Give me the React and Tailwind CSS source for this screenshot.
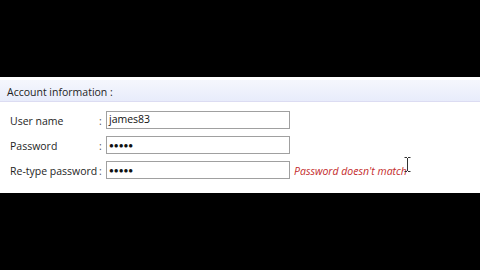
import React from 'react';

const rows = [
  { label: 'User name', value: 'james83' },
  { label: 'Password', value: '●●●●●', secret: true },
  { label: 'Re-type password', value: '●●●●●', secret: true, error: "Password doesn't match" },
];

export default function App() {
  return (
    <div className="w-[480px] h-[270px] bg-black flex flex-col" style={{ fontFamily: '"Open Sans", "Noto Sans", sans-serif' }}>
      <div className="h-[77px]" />
      <div className="relative h-[116px] bg-white flex flex-col pt-[3px]">
        <div className="h-[22px] bg-gradient-to-b from-[#f5f7fd] to-[#e8ecfb] border-b border-[#dcdcf2] flex items-center pl-[7px] pt-[5px] text-[10.5px] text-[#1e1e1e] whitespace-nowrap">
          Account information :
        </div>
        <div className="flex flex-col gap-[7px] pt-[9px]">
          {rows.map((row) => (
            <div key={row.label} className="flex items-center h-[18px]">
              <span className="w-[88px] shrink-0 pl-[10px] pt-[3px] text-[10.5px] text-[#1e1e1e] whitespace-nowrap">{row.label}</span>
              <span className="w-[18px] shrink-0 pl-[11px] pt-[3px] text-[10.5px] text-[#555]">:</span>
              <div className="w-[184px] shrink-0 h-[18px] border border-[#a0a0a0] bg-white flex items-center pl-[2px] text-[#111]">
                {row.secret ? (
                  <span className="text-[8px] leading-none">{row.value}</span>
                ) : (
                  <span className="text-[10.5px]">{row.value}</span>
                )}
              </div>
              {row.error && (
                <span className="ml-[4px] pt-[3px] text-[10.5px] italic text-[#c42b2b] whitespace-nowrap">{row.error}</span>
              )}
            </div>
          ))}
        </div>
        <svg className="absolute left-[404px] top-[80px]" width="7" height="15" viewBox="0 0 7 15">
          <path d="M0.5 0.5h2.5M4 0.5h2.5M3.5 1v13M0.5 14.5h2.5M4 14.5h2.5" stroke="#333" strokeWidth="1" fill="none" />
        </svg>
      </div>
    </div>
  );
}
